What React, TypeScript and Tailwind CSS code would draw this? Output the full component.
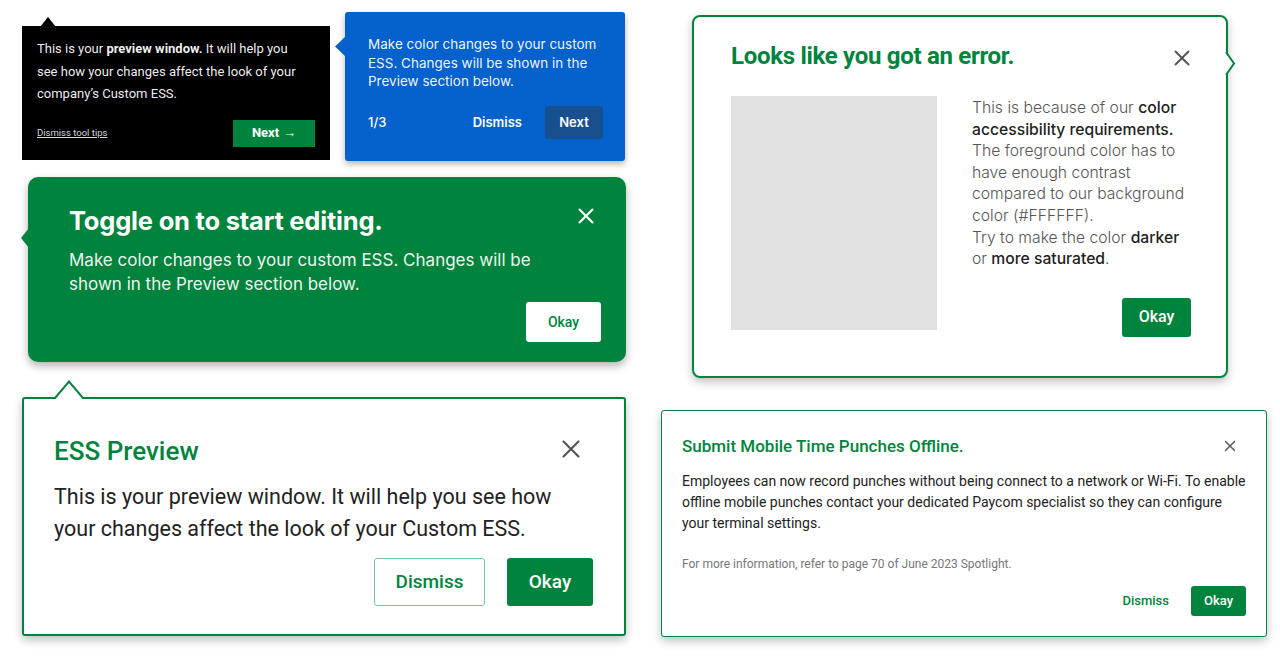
import { X } from "lucide-react";

const GREEN = "#00843d";

function BlackTip() {
  return (
    <div className="relative mt-[14px] w-[308px] h-[134px] bg-black px-[15px] pt-[12px] font-['Roboto',sans-serif]">
      <svg className="absolute left-[18px] top-[-10px]" width="16" height="11" viewBox="0 0 16 11">
        <polygon points="0,11 8,1 16,11" fill="#000" />
      </svg>
      <p className="text-[13px] leading-[22.5px] text-white/95 w-[270px]">
        This is your <span className="font-bold">preview window.</span> It will help you see how your changes affect the
        look of your company’s Custom ESS.
      </p>
      <div className="flex items-center justify-between mt-[14px]">
        <span className="text-[9.5px] underline text-gray-300">Dismiss tool tips</span>
        <button className="w-[82px] h-[27px] bg-[#00843d] text-white text-[13px] font-bold flex items-center justify-center gap-1">
          Next <span className="font-normal">→</span>
        </button>
      </div>
    </div>
  );
}

function BlueTip() {
  return (
    <div className="relative w-[280px] h-[149px] rounded-[3px] bg-[#0561cb] shadow-[0_3px_6px_rgba(0,0,0,0.3)] pl-[23px] pr-[22px] pt-[23px] font-['Inter',sans-serif]">
      <svg className="absolute left-[-10px] top-[24px]" width="11" height="21" viewBox="0 0 11 21">
        <polygon points="11,0 0,10.5 11,21" fill="#0561cb" />
      </svg>
      <p className="text-[13.5px] leading-[18.7px] text-white/95">
        Make color changes to your custom ESS. Changes will be shown in the Preview section below.
      </p>
      <div className="flex items-center mt-[15px]">
        <span className="text-[13px] font-medium text-white">1/3</span>
        <span className="ml-auto text-[13px] font-semibold text-white">Dismiss</span>
        <button className="ml-[23px] w-[58px] h-[33px] rounded-[3px] bg-[#174f8f] text-white text-[13px] font-semibold">
          Next
        </button>
      </div>
    </div>
  );
}

function GreenTip() {
  return (
    <div className="relative ml-[6px] mt-[16px] w-[598px] h-[185px] rounded-[10px] bg-[#00843d] shadow-[0_4px_8px_rgba(0,0,0,0.3)] pl-[41px] pr-[25px] pt-[27px] font-['Inter',sans-serif]">
      <svg className="absolute left-[-7px] top-[51px]" width="8" height="20" viewBox="0 0 8 20">
        <polygon points="8,0 0,10 8,20" fill="#00843d" />
      </svg>
      <div className="flex items-start justify-between">
        <h2 className="text-[25.5px] leading-[34px] font-bold text-white tracking-[-0.2px]">Toggle on to start editing.</h2>
        <X className="mt-[-1px] mr-[2px] text-white" size={26} strokeWidth={1.9} />
      </div>
      <p className="mt-[10px] text-[17px] leading-[24px] text-white/95 w-[480px]">
        Make color changes to your custom ESS. Changes will be shown in the Preview section below.
      </p>
      <div className="flex justify-end mt-[6px]">
        <button className="w-[75px] h-[40px] rounded-[3px] bg-white text-[#00843d] text-[14px] font-medium font-['Roboto',sans-serif]">
          Okay
        </button>
      </div>
    </div>
  );
}

function PreviewTip() {
  return (
    <div className="relative mt-[35px] w-[604px] h-[239px] rounded-[3px] border-2 border-[#00843d] bg-white shadow-[0_4px_10px_rgba(0,0,0,0.25)] pl-[30px] pr-[30px] pt-[36px] font-['Roboto',sans-serif]">
      <svg className="absolute left-[31px] top-[-19px]" width="28" height="21" viewBox="0 0 28 21">
        <polygon points="1,17.5 14,1.5 27,17.5 27,21 1,21" fill="#fff" />
        <polyline points="0,18 14,1.5 28,18" fill="none" stroke={GREEN} strokeWidth="2" />
      </svg>
      <div className="flex items-start justify-between">
        <h2 className="text-[26px] leading-[32px] font-medium text-[#00843d]">ESS Preview</h2>
        <X className="mr-[8px] mt-[-1px] text-[#555]" size={30} strokeWidth={1.7} />
      </div>
      <p className="mt-[14px] text-[21.5px] leading-[32px] text-[#222] w-[530px]">
        This is your preview window. It will help you see how your changes affect the look of your Custom ESS.
      </p>
      <div className="flex justify-end gap-[22px] mt-[13px] pr-[1px]">
        <button className="w-[111px] h-[48px] rounded-[3px] border border-[#7cc59b] text-[#00843d] text-[19px] font-medium">
          Dismiss
        </button>
        <button className="w-[86px] h-[48px] rounded-[3px] bg-[#00843d] text-white text-[19px] font-medium">Okay</button>
      </div>
    </div>
  );
}

function ErrorTip() {
  const lines = [
    <>This is because of our <b className="font-medium text-[#222]">color</b></>,
    <b className="font-medium text-[#222]">accessibility requirements.</b>,
    <>The foreground color has to</>,
    <>have enough contrast</>,
    <>compared to our background</>,
    <>color (#FFFFFF).</>,
    <>Try to make the color <b className="font-medium text-[#222]">darker</b></>,
    <>or <b className="font-medium text-[#222]">more saturated</b>.</>,
  ];
  return (
    <div className="relative ml-[31px] w-[536px] h-[363px] rounded-[8px] border-2 border-[#00843d] bg-white shadow-[0_4px_10px_rgba(0,0,0,0.25)] pl-[37px] pr-[35px] pt-[24px]">
      <svg className="absolute right-[-10px] top-[33px]" width="11" height="27" viewBox="0 0 11 27">
        <polygon points="0,2 8.5,13.5 0,25" fill="#fff" />
        <polyline points="1,2 9,13.5 1,25" fill="none" stroke={GREEN} strokeWidth="2" />
      </svg>
      <div className="flex items-start justify-between font-['Roboto',sans-serif]">
        <h2 className="text-[24px] leading-[30px] font-bold text-[#00843d] tracking-[-0.3px]">Looks like you got an error.</h2>
        <X className="mt-[4px] mr-[-4px] text-[#555]" size={26} strokeWidth={1.8} />
      </div>
      <div className="flex mt-[25px]">
        <div className="w-[206px] h-[234px] bg-[#e1e1e1]" />
        <div className="ml-[35px] flex-1 flex flex-col">
          <div className="mt-[1px] text-[15.7px] leading-[21.6px] text-[#555] font-['Inter',sans-serif] font-light">
            {lines.map((l, i) => (
              <div key={i} className="whitespace-nowrap">{l}</div>
            ))}
          </div>
          <div className="flex justify-end mt-[28px]">
            <button className="w-[69px] h-[39px] rounded-[3px] bg-[#00843d] text-white text-[16px] font-medium font-['Roboto',sans-serif]">
              Okay
            </button>
          </div>
        </div>
      </div>
    </div>
  );
}

function OfflineTip() {
  return (
    <div className="mt-[32px] w-[606px] h-[227px] rounded-[3px] border-[1.5px] border-[#00843d] bg-white shadow-[0_4px_10px_rgba(0,0,0,0.25)] pl-[20px] pr-[20px] pt-[23px] font-['Roboto',sans-serif]">
      <div className="flex items-start justify-between">
        <h2 className="text-[17px] leading-[24px] font-medium text-[#00843d]">Submit Mobile Time Punches Offline.</h2>
        <X className="mt-[3px] mr-[7px] text-[#555]" size={18} strokeWidth={1.8} />
      </div>
      <p className="mt-[13px] text-[14px] leading-[21px] text-[#222] w-[565px]">
        Employees can now record punches without being connect to a network or Wi-Fi. To enable offline mobile punches
        contact your dedicated Paycom specialist so they can configure your terminal settings.
      </p>
      <p className="mt-[22px] text-[12px] leading-[16px] text-[#777]">
        For more information, refer to page 70 of June 2023 Spotlight.
      </p>
      <div className="flex justify-end items-center gap-[22px] mt-[14px]">
        <span className="text-[13px] font-medium text-[#00843d]">Dismiss</span>
        <button className="w-[55px] h-[30px] rounded-[3px] bg-[#00843d] text-white text-[13px] font-medium">Okay</button>
      </div>
    </div>
  );
}

export default function App() {
  return (
    <div className="w-[1280px] h-[663px] bg-white overflow-hidden flex pl-[22px] pt-[12px]">
      <div className="w-[604px] flex flex-col">
        <div className="flex items-start gap-[15px]">
          <BlackTip />
          <BlueTip />
        </div>
        <GreenTip />
        <PreviewTip />
      </div>
      <div className="ml-[35px] pt-[3px] flex flex-col">
        <ErrorTip />
        <OfflineTip />
      </div>
    </div>
  );
}
